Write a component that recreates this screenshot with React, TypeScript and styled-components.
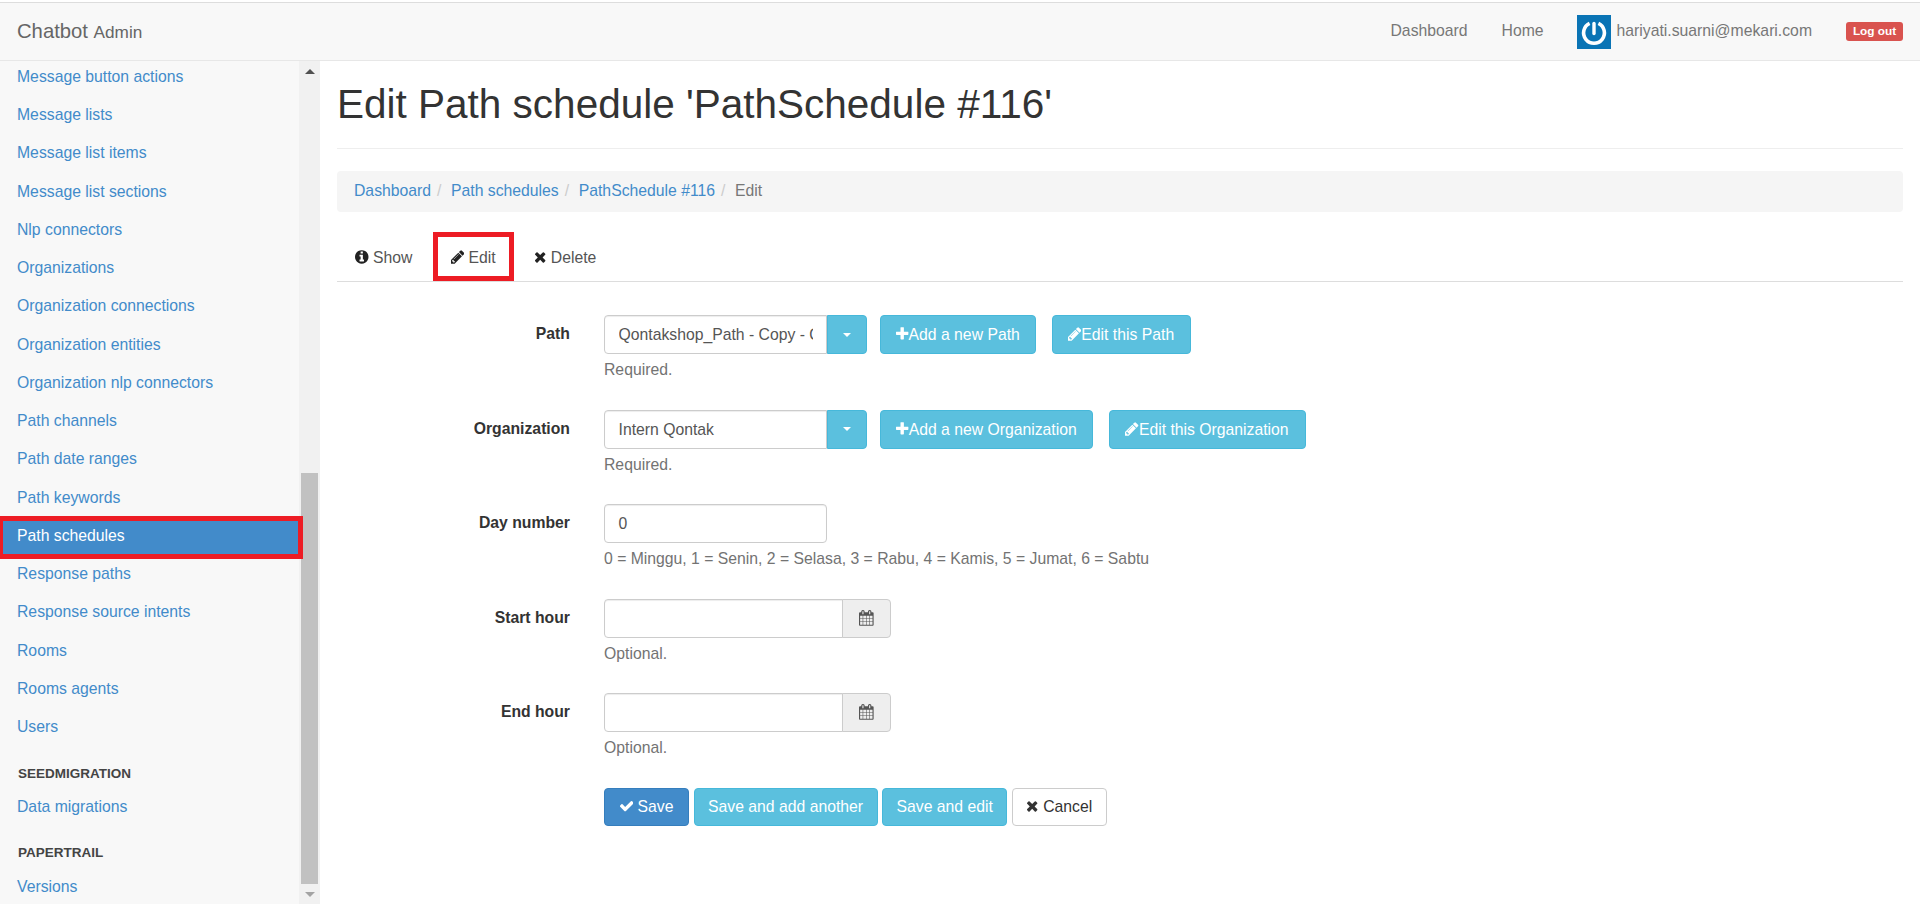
import React from "react";
import styled, { createGlobalStyle } from "styled-components";

const Global = createGlobalStyle`
  html, body { margin: 0; padding: 0; height: 904px; overflow: hidden; background: #fff; }
  body { font-family: "Liberation Sans", Arial, sans-serif; font-size: 15.75px; line-height: 22.5px; color: #333; }
  *, *::before, *::after { box-sizing: border-box; }
`;

const Page = styled.div`
  height: 904px;
  padding-top: 2px;
  display: flex;
  flex-direction: column;
  overflow: hidden;
`;
const Navbar = styled.header`
  height: 59px;
  flex: none;
  background: #f8f8f8;
  border-top: 1px solid #ddd;
  border-bottom: 1px solid #e7e7e7;
  display: flex;
  align-items: center;
  padding: 0 17px;
`;
const Brand = styled.div`
  font-size: 20.25px;
  color: #666;
  flex: 1;
  small { font-size: 17.2px; }
`;
const NavLink = styled.a`
  color: #777;
  margin-right: 34px;
`;
const Avatar = styled.svg`
  width: 34px;
  height: 34px;
  display: block;
  margin-left: -1px;
  margin-right: 6px;
`;
const Email = styled.span`
  color: #777;
  margin-right: 34px;
`;
const LogOut = styled.span`
  background: #d9534f;
  color: #fff;
  font-weight: 700;
  font-size: 11.8px;
  line-height: 19px;
  height: 19px;
  width: 57px;
  border-radius: 3px;
  text-align: center;
`;
const Body = styled.div`
  flex: 1;
  display: flex;
  min-height: 0;
`;
const Sidebar = styled.aside`
  width: 320px;
  flex: none;
  display: flex;
  overflow: hidden;
  background: #f8f8f8;
`;
const Nav = styled.nav`
  width: 299px;
  flex: none;
  margin-top: -3px;
`;
const NavItem = styled.a<{ $active?: boolean }>`
  display: flex;
  align-items: center;
  position: relative;
  height: 38.25px;
  padding-left: 17px;
  color: ${(p) => (p.$active ? "#fff" : "#428bca")};
  background: ${(p) => (p.$active ? "#428bca" : "transparent")};
  ${(p) =>
    p.$active
      ? `z-index: 2;
  &::after {
    content: "";
    position: absolute;
    left: -2px;
    top: -1px;
    width: 305px;
    height: 43px;
    border: 5px solid #ed1c24;
  }`
      : ""}
`;
const NavHeader = styled.div`
  height: 41.6px;
  padding: 18px 0 0 18px;
  font-size: 13.5px;
  line-height: 18px;
  font-weight: 700;
  color: #444;
`;
const Scrollbar = styled.div`
  width: 21px;
  flex: none;
  background: #f1f1f1;
  display: flex;
  flex-direction: column;
  align-items: center;
`;
const ScrollArrow = styled.div<{ $up?: boolean }>`
  height: 20px;
  flex: none;
  display: flex;
  align-items: center;
  justify-content: center;
  &::before {
    content: "";
    border-left: 5px solid transparent;
    border-right: 5px solid transparent;
    ${(p) => (p.$up ? "border-bottom: 5px solid #505050;" : "border-top: 5px solid #a3a3a3;")}
  }
`;
const ScrollSpace = styled.div`
  flex: 1;
`;
const ScrollThumb = styled.div`
  width: 17px;
  height: 411px;
  flex: none;
  background: #c1c1c1;
`;
const Main = styled.main`
  flex: 1;
  min-width: 0;
  padding: 0 17px;
`;
const Title = styled.h1`
  margin: 0;
  height: 88px;
  padding-top: 21px;
  font-size: 40.5px;
  line-height: 44px;
  font-weight: 400;
  color: #333;
  border-bottom: 1px solid #eee;
`;
const Breadcrumb = styled.div`
  margin-top: 22px;
  height: 41px;
  background: #f5f5f5;
  border-radius: 4px;
  padding: 0 17px;
  display: flex;
  align-items: center;
  color: #777;
`;
const Crumb = styled.a`
  color: #428bca;
`;
const Slash = styled.span`
  color: #ccc;
  padding: 0 9.6px 0 6px;
`;
const Tabs = styled.div`
  margin-top: 20px;
  height: 50px;
  display: flex;
  border-bottom: 1px solid #ddd;
`;
const Tab = styled.a<{ $marked?: boolean }>`
  height: 49px;
  padding: 2px 18.15px 0;
  margin-right: 2px;
  line-height: 47px;
  color: #555;
  white-space: pre;
  ${(p) => (p.$marked ? "box-shadow: inset 0 0 0 5px #ed1c24;" : "")}
  svg { color: #222; }
`;
const Form = styled.form`
  padding-top: 33px;
`;
const Row = styled.div`
  display: grid;
  grid-template-columns: 233px 1fr;
  column-gap: 34px;
  height: 94.5px;
`;
const Label = styled.label`
  font-weight: 700;
  text-align: right;
  color: #333;
  padding-top: 8px;
`;
const Controls = styled.div`
  display: flex;
  gap: 13px;
  a + a { margin-left: 2.5px; }
`;
const Combo = styled.div`
  display: flex;
  flex: none;
  height: 39px;
`;
const Input = styled.div<{ $w: number; $joined?: boolean }>`
  width: ${(p) => p.$w}px;
  height: 39px;
  background: #fff;
  border: 1px solid #ccc;
  border-radius: ${(p) => (p.$joined ? "4px 0 0 4px" : "4px")};
  box-shadow: inset 0 1px 1px rgba(0, 0, 0, 0.075);
  padding: 0 13px 0 13.5px;
  line-height: 37px;
  color: #555;
`;
const Clip = styled.div`
  white-space: nowrap;
  overflow: hidden;
`;
const CaretBtn = styled.div`
  width: 40px;
  height: 39px;
  background: #5bc0de;
  border: 1px solid #46b8da;
  border-radius: 0 4px 4px 0;
  display: flex;
  align-items: center;
  justify-content: center;
  &::before {
    content: "";
    border-left: 4px solid transparent;
    border-right: 4px solid transparent;
    border-top: 4px solid #fff;
  }
`;
const Addon = styled.div`
  width: 49px;
  height: 39px;
  margin-left: -1px;
  background: #eee;
  border: 1px solid #ccc;
  border-radius: 0 4px 4px 0;
  color: #555;
  text-align: center;
  line-height: 37px;
`;
const Btn = styled.a<{ $kind?: "info" | "primary" | "default"; $w: number }>`
  height: 39px;
  flex: none;
  width: ${(p) => p.$w}px;
  display: block;
  text-align: center;
  line-height: 37px;
  white-space: pre;
  border-radius: 4px;
  border: 1px solid
    ${(p) => (p.$kind === "primary" ? "#357ebd" : p.$kind === "default" ? "#ccc" : "#46b8da")};
  background: ${(p) => (p.$kind === "primary" ? "#428bca" : p.$kind === "default" ? "#fff" : "#5bc0de")};
  color: ${(p) => (p.$kind === "default" ? "#333" : "#fff")};
`;
const Help = styled.div`
  margin-top: 5px;
  color: #737373;
  line-height: 22px;
`;
const Actions = styled.div`
  margin-left: 267px;
  display: flex;
  gap: 4.6px;
  a { height: 38px; line-height: 36px; }
`;
const Glyph = styled.svg`
  height: 1em;
  vertical-align: -0.14em;
  fill: currentColor;
`;

const icons = {
  plus: ["192 0 1408 1792", "M1600 736v192q0 40-28 68t-68 28h-416v416q0 40-28 68t-68 28h-192q-40 0-68-28t-28-68v-416h-416q-40 0-68-28t-28-68v-192q0-40 28-68t68-28h416v-416q0-40 28-68t68-28h192q40 0 68 28t28 68v416h416q40 0 68 28t28 68z"],
  times: ["192 0 1408 1792", "M1490 1322q0 40-28 68l-136 136q-28 28-68 28t-68-28l-294-294-294 294q-28 28-68 28t-68-28l-136-136q-28-28-28-68t28-68l294-294-294-294q-28-28-28-68t28-68l136-136q28-28 68-28t68 28l294 294 294-294q28-28 68-28t68 28l136 136q28 28 28 68t-28 68l-294 294 294 294q28 28 28 68z"],
  check: ["128 0 1543 1792", "M1671 566q0 40-28 68l-724 724-136 136q-28 28-68 28t-68-28l-136-136-362-362q-28-28-28-68t28-68l136-136q28-28 68-28t68 28l294 295 656-657q28-28 68-28t68 28l136 136q28 28 28 68z"],
  pencil: ["128 0 1536 1792", "M491 1536l91-91-235-235-91 91v107h128v128h107zm523-928q0-22-22-22-10 0-17 7l-542 542q-7 7-7 17 0 22 22 22 10 0 17-7l542-542q7-7 7-17zm-54-192l416 416-832 832h-416v-416zm683 96q0 53-37 90l-166 166-416-416 166-165q36-38 90-38 53 0 91 38l235 234q37 39 37 91z"],
  info: ["128 0 1536 1792", "M1152 1376v-160q0-14-9-23t-23-9h-96v-512q0-14-9-23t-23-9h-320q-14 0-23 9t-9 23v160q0 14 9 23t23 9h96v320h-96q-14 0-23 9t-9 23v160q0 14 9 23t23 9h448q14 0 23-9t9-23zm-128-896v-160q0-14-9-23t-23-9h-192q-14 0-23 9t-9 23v160q0 14 9 23t23 9h192q14 0 23-9t9-23zm640 416q0 209-103 385.5t-279.5 279.5-385.5 103-385.5-103-279.5-279.5-103-385.5 103-385.5 279.5-279.5 385.5-103 385.5 103 279.5 279.5 103 385.5z"],
  calendar: ["64 0 1664 1792", "M192 1664h288v-288h-288v288zm352 0h320v-288h-320v288zm-352-352h288v-320h-288v320zm352 0h320v-320h-320v320zm-352-384h288v-288h-288v288zm736 736h320v-288h-320v288zm-384-736h320v-288h-320v288zm768 736h288v-288h-288v288zm-384-352h320v-320h-320v320zm-352-864v-288q0-13-9.5-22.5t-22.5-9.5h-64q-13 0-22.5 9.5t-9.5 22.5v288q0 13 9.5 22.5t22.5 9.5h64q13 0 22.5-9.5t9.5-22.5zm736 864h288v-320h-288v320zm-384-384h320v-288h-320v288zm384 0h288v-288h-288v288zm32-480v-288q0-13-9.5-22.5t-22.5-9.5h-64q-13 0-22.5 9.5t-9.5 22.5v288q0 13 9.5 22.5t22.5 9.5h64q13 0 22.5-9.5t9.5-22.5zm384-64v1280q0 52-38 90t-90 38h-1408q-52 0-90-38t-38-90v-1280q0-52 38-90t90-38h128v-96q0-66 47-113t113-47h64q66 0 113 47t47 113v96h384v-96q0-66 47-113t113-47h64q66 0 113 47t47 113v96h128q52 0 90 38t38 90z"],
};

const Icon = ({ name }: { name: keyof typeof icons }) => {
  const [box, d] = icons[name];
  return (
    <Glyph viewBox={box} width={`${Number(box.split(" ")[2]) / 1792}em`}>
      <path d={d} />
    </Glyph>
  );
};

const top = [
  "Message button actions", "Message lists", "Message list items", "Message list sections", "Nlp connectors",
  "Organizations", "Organization connections", "Organization entities", "Organization nlp connectors",
  "Path channels", "Path date ranges", "Path keywords", "Path schedules", "Response paths",
  "Response source intents", "Rooms", "Rooms agents", "Users",
];

export default function App() {
  return (
    <Page>
      <Global />
      <Navbar>
        <Brand>Chatbot <small>Admin</small></Brand>
        <NavLink>Dashboard</NavLink>
        <NavLink>Home</NavLink>
        <Avatar viewBox="0 0 34 34">
          <rect width="34" height="34" fill="#0a74b5" />
          <path d="M12.6 8.4a10.4 10.4 0 1 0 8.8 0" fill="none" stroke="#fff" strokeWidth="3.6" />
          <path d="M17 8.5v10" stroke="#fff" strokeWidth="3.4" strokeLinecap="round" />
        </Avatar>
        <Email>hariyati.suarni@mekari.com</Email>
        <LogOut>Log out</LogOut>
      </Navbar>
      <Body>
        <Sidebar>
          <Nav>
            {top.map((t) => (
              <NavItem key={t} $active={t === "Path schedules"}>{t}</NavItem>
            ))}
            <NavHeader>SEEDMIGRATION</NavHeader>
            <NavItem>Data migrations</NavItem>
            <NavHeader>PAPERTRAIL</NavHeader>
            <NavItem>Versions</NavItem>
          </Nav>
          <Scrollbar>
            <ScrollArrow $up />
            <ScrollSpace />
            <ScrollThumb />
            <ScrollArrow />
          </Scrollbar>
        </Sidebar>
        <Main>
          <Title>Edit Path schedule 'PathSchedule #116'</Title>
          <Breadcrumb>
            <Crumb>Dashboard</Crumb><Slash>/</Slash>
            <Crumb>Path schedules</Crumb><Slash>/</Slash>
            <Crumb>PathSchedule #116</Crumb><Slash>/</Slash>
            Edit
          </Breadcrumb>
          <Tabs>
            <Tab><Icon name="info" /> Show</Tab>
            <Tab $marked><Icon name="pencil" /> Edit</Tab>
            <Tab><Icon name="times" /> Delete</Tab>
          </Tabs>
          <Form>
            <Row>
              <Label>Path</Label>
              <div>
                <Controls>
                  <Combo>
                    <Input $w={223} $joined><Clip>Qontakshop_Path - Copy - Qontak</Clip></Input>
                    <CaretBtn />
                  </Combo>
                  <Btn $w={156}><Icon name="plus" />Add a new Path</Btn>
                  <Btn $w={139}><Icon name="pencil" />Edit this Path</Btn>
                </Controls>
                <Help>Required.</Help>
              </div>
            </Row>
            <Row>
              <Label>Organization</Label>
              <div>
                <Controls>
                  <Combo>
                    <Input $w={223} $joined>Intern Qontak</Input>
                    <CaretBtn />
                  </Combo>
                  <Btn $w={213}><Icon name="plus" />Add a new Organization</Btn>
                  <Btn $w={197}><Icon name="pencil" />Edit this Organization</Btn>
                </Controls>
                <Help>Required.</Help>
              </div>
            </Row>
            <Row>
              <Label>Day number</Label>
              <div>
                <Input $w={223}>0</Input>
                <Help>0 = Minggu, 1 = Senin, 2 = Selasa, 3 = Rabu, 4 = Kamis, 5 = Jumat, 6 = Sabtu</Help>
              </div>
            </Row>
            <Row>
              <Label>Start hour</Label>
              <div>
                <Combo>
                  <Input $w={239} $joined />
                  <Addon><Icon name="calendar" /></Addon>
                </Combo>
                <Help>Optional.</Help>
              </div>
            </Row>
            <Row>
              <Label>End hour</Label>
              <div>
                <Combo>
                  <Input $w={239} $joined />
                  <Addon><Icon name="calendar" /></Addon>
                </Combo>
                <Help>Optional.</Help>
              </div>
            </Row>
            <Actions>
              <Btn $kind="primary" $w={85}><Icon name="check" /> Save</Btn>
              <Btn $w={184}>Save and add another</Btn>
              <Btn $w={125}>Save and edit</Btn>
              <Btn $kind="default" $w={95}><Icon name="times" /> Cancel</Btn>
            </Actions>
          </Form>
        </Main>
      </Body>
    </Page>
  );
}
